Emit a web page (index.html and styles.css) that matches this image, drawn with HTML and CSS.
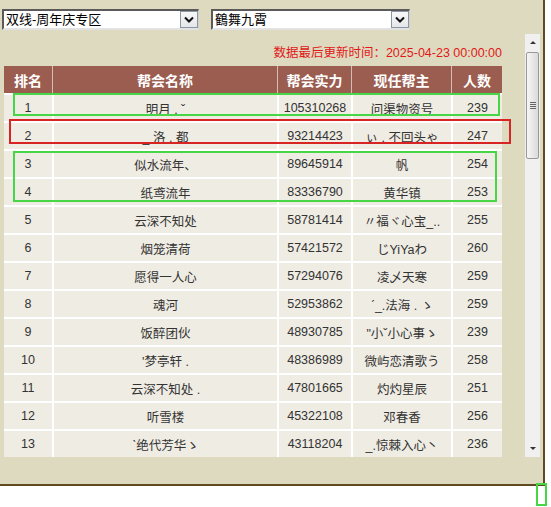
FILE: index.html
```html
<!DOCTYPE html>
<html lang="zh-CN">
<head>
<meta charset="utf-8">
<title>帮会排名</title>
<link rel="stylesheet" href="styles.css">
</head>
<body>
<div class="frame">
  <div class="selects">
    <div class="select s1">
      <span class="val">双线-周年庆专区</span>
      <span class="btn"><svg width="10" height="7" viewBox="0 0 10 7"><polyline points="1,1.5 5,5.5 9,1.5" fill="none" stroke="#111" stroke-width="2"/></svg></span>
    </div>
    <div class="select s2">
      <span class="val">鶴舞九霄</span>
      <span class="btn"><svg width="10" height="7" viewBox="0 0 10 7"><polyline points="1,1.5 5,5.5 9,1.5" fill="none" stroke="#111" stroke-width="2"/></svg></span>
    </div>
  </div>
  <div class="panel">
    <div class="content">
      <div class="meta">数据最后更新时间：2025-04-23 00:00:00</div>
      <div class="tablewrap">
        <table class="rank">
          <thead>
            <tr><th class="c1">排名</th><th class="c2">帮会名称</th><th class="c3">帮会实力</th><th class="c4">现任帮主</th><th class="c5">人数</th></tr>
          </thead>
          <tbody>
            <tr><td>1</td><td>明月 . ˇ</td><td>105310268</td><td>问渠物资号</td><td>239</td></tr>
            <tr><td>2</td><td>_ 洛 . 都</td><td>93214423</td><td>ぃ . 不回头ゃ</td><td>247</td></tr>
            <tr><td>3</td><td>似水流年、</td><td>89645914</td><td>帆</td><td>254</td></tr>
            <tr><td>4</td><td>纸鸢流年</td><td>83336790</td><td>黄华镇</td><td>253</td></tr>
            <tr><td>5</td><td>云深不知处</td><td>58781414</td><td>〃福ヾ心宝_..</td><td>255</td></tr>
            <tr><td>6</td><td>烟笼清荷</td><td>57421572</td><td>じYiYaわ</td><td>260</td></tr>
            <tr><td>7</td><td>愿得一人心</td><td>57294076</td><td>凌乄天寒</td><td>259</td></tr>
            <tr><td>8</td><td>魂河</td><td>52953862</td><td>ˊ_.法海 . ゝ</td><td>259</td></tr>
            <tr><td>9</td><td>饭醉团伙</td><td>48930785</td><td>"小ˇ小心事ゝ</td><td>239</td></tr>
            <tr><td>10</td><td>'梦亭轩 .</td><td>48386989</td><td>微屿恋清歌う</td><td>258</td></tr>
            <tr><td>11</td><td>云深不知处 .</td><td>47801665</td><td>灼灼星辰</td><td>251</td></tr>
            <tr><td>12</td><td>听雪楼</td><td>45322108</td><td>邓春香</td><td>256</td></tr>
            <tr><td>13</td><td>ˋ绝代芳华ゝ</td><td>43118204</td><td>_.惊棘入心丶</td><td>236</td></tr>
          </tbody>
        </table>
        <div class="mark green m1"></div>
        <div class="mark red m2"></div>
        <div class="mark green m3"></div>
      </div>
    </div>
    <div class="scrollbar">
      <div class="arrow"><span class="tri up"></span></div>
      <div class="thumb"><span class="grip"></span><span class="grip"></span><span class="grip"></span><span class="grip"></span></div>
      <div class="track"></div>
      <div class="arrow"><span class="tri down"></span></div>
    </div>
  </div>
</div>
<div class="corner-mark"></div>
</body>
</html>
```
FILE: styles.css
```css
html, body {
  margin: 0;
  padding: 0;
  background: #ffffff;
}
body {
  font-family: "Liberation Sans", "Noto Sans CJK SC", sans-serif;
  color: #333;
  position: relative;
  width: 551px;
  height: 507px;
  overflow: hidden;
}
.frame {
  width: 543px;
  height: 484px;
  background: #dedac0;
  border-right: 2px solid #5f4a22;
  border-bottom: 2px solid #5f4a22;
}
.selects {
  display: flex;
  gap: 12px;
  padding: 9px 0 0 2px;
  height: 21px;
}
.select {
  box-sizing: border-box;
  height: 21px;
  background: #fff;
  border-top: 2px solid #5a5a5a;
  border-left: 2px solid #5a5a5a;
  border-right: 1px solid #d0d0d0;
  border-bottom: 2px solid #e2e2e2;
  display: flex;
  align-items: center;
  justify-content: space-between;
  font-size: 13px;
  color: #000;
}
.s1 { width: 197px; }
.s2 { width: 199px; }
.val {
  padding-left: 2px;
  line-height: 17px;
  white-space: nowrap;
}
.btn {
  box-sizing: border-box;
  width: 18px;
  height: 17px;
  margin-right: 0;
  border: 1px solid #8c96a3;
  background: linear-gradient(#f8f8f8, #e4e6ea);
  display: flex;
  align-items: center;
  justify-content: center;
}
.panel {
  display: flex;
  margin: 4px 0 0 4px;
  height: 423px;
}
.content {
  width: 498px;
  margin-right: 23px;
}
.meta {
  box-sizing: border-box;
  height: 32px;
  padding-top: 12px;
  text-align: right;
  color: #e01818;
  font-size: 12.5px;
  line-height: 14px;
  white-space: nowrap;
}
.tablewrap {
  position: relative;
}
.rank {
  width: 498px;
  table-layout: fixed;
  border-collapse: separate;
  border-spacing: 0;
}
.rank th {
  box-sizing: border-box;
  height: 27px;
  padding: 0;
  background: #9b5d50;
  color: #fff;
  font-size: 14px;
  font-weight: bold;
  text-align: center;
  border-left: 1px solid #d6bcb5;
}
.rank th.c1 { width: 48px; border-left: none; }
.rank th.c2 { width: 225px; }
.rank th.c3 { width: 74px; }
.rank th.c4 { width: 100px; }
.rank th.c5 { width: 51px; }
.rank td {
  box-sizing: border-box;
  height: 28px;
  padding: 0;
  background: #efece3;
  border-top: 2px solid #fff;
  border-left: 2px solid #fff;
  text-align: center;
  font-size: 12.5px;
  color: #333;
  white-space: nowrap;
  overflow: hidden;
}
.rank td:first-child { border-left: none; }
.mark {
  position: absolute;
  box-sizing: border-box;
  border: 2px solid #46d646;
}
.mark.red { border-color: #d92424; }
.m1 { left: 9px; top: 27px; width: 487px; height: 23px; }
.m2 { left: 5px; top: 53px; width: 502px; height: 25px; }
.m3 { left: 9px; top: 85px; width: 484px; height: 51px; }
.scrollbar {
  width: 15px;
  background: #f0f0f0;
  display: flex;
  flex-direction: column;
}
.arrow {
  height: 17px;
  display: flex;
  align-items: center;
  justify-content: center;
}
.tri {
  width: 0;
  height: 0;
  border-left: 3px solid transparent;
  border-right: 3px solid transparent;
}
.tri.up { border-bottom: 3px solid #333; }
.tri.down { border-top: 3px solid #333; }
.thumb {
  box-sizing: border-box;
  height: 107px;
  margin: 1px 1px 0 1px;
  border: 1px solid #999;
  border-radius: 2px;
  background: linear-gradient(to right, #f6f6f6, #dadada);
  display: flex;
  flex-direction: column;
  align-items: center;
  justify-content: center;
  gap: 1px;
}
.grip {
  width: 6px;
  height: 1px;
  background: #666;
}
.track {
  flex: 1;
}
.corner-mark {
  position: absolute;
  left: 536px;
  top: 483px;
  width: 11px;
  height: 23px;
  box-sizing: border-box;
  border: 2px solid #46d646;
}
```
